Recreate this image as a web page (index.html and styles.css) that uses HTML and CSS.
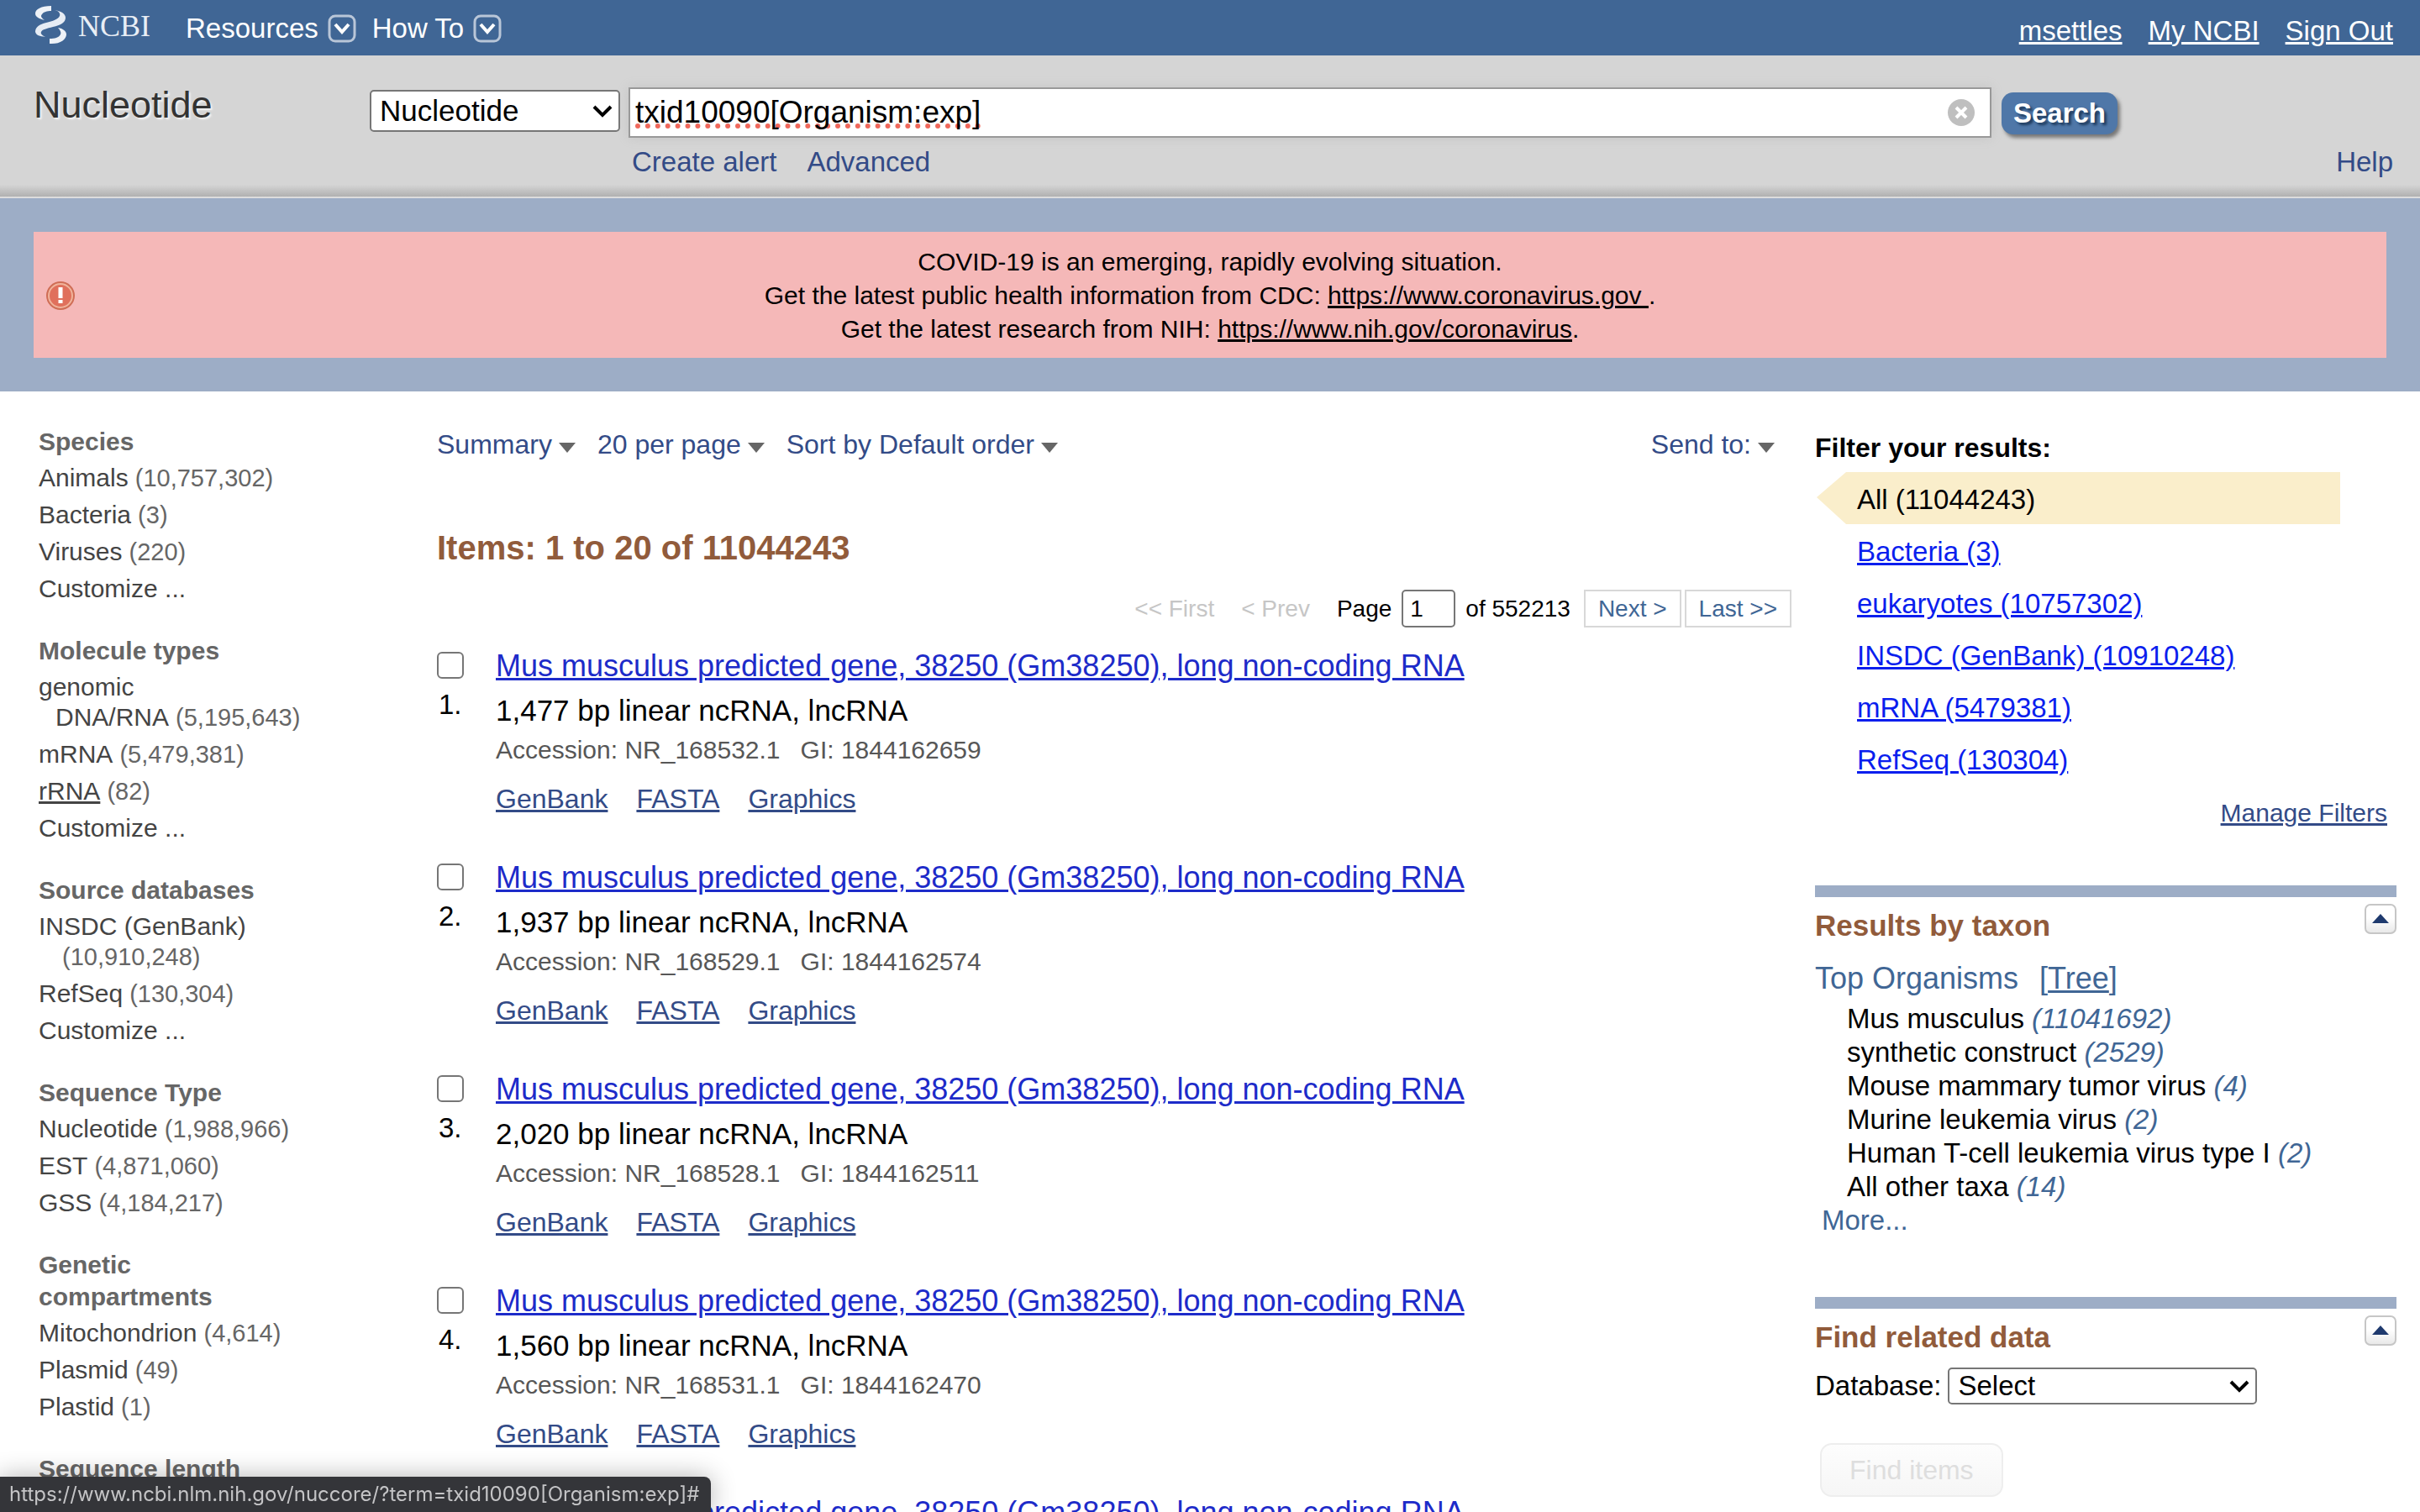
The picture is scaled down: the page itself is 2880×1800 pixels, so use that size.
FILE: index.html
```html
<!DOCTYPE html>
<html lang="en">
<head>
<meta charset="utf-8">
<title>txid10090[Organism:exp] - Nucleotide - NCBI</title>
<link rel="stylesheet" href="styles.css">
</head>
<body>
<svg class="symbols" aria-hidden="true">
  <symbol id="boxed-arrow" viewBox="0 0 34 34">
    <rect x="2" y="2" width="30" height="30" rx="7" fill="none" stroke="#b9c6d8" stroke-width="3"/>
    <path d="M9 12l8 9 8-9" fill="none" stroke="#fff" stroke-width="4"/>
  </symbol>
  <symbol id="caret" viewBox="0 0 20 12"><path d="M0 0h20L10 12z" fill="#666"/></symbol>
  <symbol id="chevron" viewBox="0 0 24 16"><path d="M2 3l10 10L22 3" fill="none" stroke="#000" stroke-width="4"/></symbol>
</svg>

<nav class="topbar">
  <a class="logo" href="#">
    <svg width="40" height="48" viewBox="0 0 40 48" aria-hidden="true">
      <path d="M20 0C8 0 1 4 1 9c0 4 4 6 11 8-4-3-5-5-3-7 2-3 6-4 11-4z" fill="#eef2f7"/>
      <path d="M24 5c5 1 7 4 6 7-2 4-8 6-16 8C6 22 1 25 1 31c1 4 5 5 12 6-4-2-6-4-5-6 1-3 7-4 14-6 9-2 15-5 15-11C37 9 31 6 24 5z" fill="#e6ecf4"/>
      <path d="M28 26c3 3 4 6 3 8-2 4-7 5-13 5v6c12 1 20-5 20-11 0-4-4-7-10-8z" fill="#eef2f7"/>
    </svg>
    <span>NCBI</span>
  </a>
  <button class="menu" type="button">Resources <svg width="34" height="34"><use href="#boxed-arrow"/></svg></button>
  <button class="menu" type="button">How To <svg width="34" height="34"><use href="#boxed-arrow"/></svg></button>
  <div class="account">
    <a href="#">msettles</a>
    <a href="#">My NCBI</a>
    <a href="#">Sign Out</a>
  </div>
</nav>

<header class="searchbar">
  <h1>Nucleotide</h1>
  <form class="search">
    <span class="select search-db">
      <select aria-label="Database to search"><option>Nucleotide</option></select>
      <svg width="24" height="16" aria-hidden="true"><use href="#chevron"/></svg>
    </span>
    <span class="term">
      <input type="text" aria-label="Search term" value="txid10090[Organism:exp]" spellcheck="false">
      <button class="clear" type="button" aria-label="Clear">
        <svg width="34" height="34" viewBox="0 0 34 34"><circle cx="17" cy="17" r="16" fill="#bfbfbf"/><path d="M11 11l12 12M23 11L11 23" stroke="#fff" stroke-width="4"/></svg>
      </button>
    </span>
    <button class="go" type="submit">Search</button>
  </form>
  <div class="search-links">
    <a href="#">Create alert</a>
    <a href="#">Advanced</a>
    <a class="help" href="#">Help</a>
  </div>
</header>

<section class="notice">
  <div class="notice-box">
    <svg width="36" height="36" viewBox="0 0 36 36" aria-hidden="true">
      <circle cx="18" cy="18" r="17" fill="#cf6d55"/>
      <circle cx="18" cy="18" r="14" fill="#e0705c" stroke="#f0b49c" stroke-width="2"/>
      <path d="M18 8v13M18 23v4" stroke="#fff" stroke-width="5"/>
    </svg>
    <p>COVID-19 is an emerging, rapidly evolving situation.<br>
    Get the latest public health information from CDC: <a href="#">https://www.coronavirus.gov&nbsp;</a>.<br>
    Get the latest research from NIH: <a href="#">https://www.nih.gov/coronavirus</a>.</p>
  </div>
</section>

<div class="page">
  <aside class="facets">
    <section>
      <h2>Species</h2>
      <ul>
        <li><a href="#">Animals</a> (10,757,302)</li>
        <li><a href="#">Bacteria</a> (3)</li>
        <li><a href="#">Viruses</a> (220)</li>
        <li><a href="#">Customize ...</a></li>
      </ul>
    </section>
    <section>
      <h2>Molecule types</h2>
      <ul>
        <li><a href="#">genomic<br>DNA/RNA</a> (5,195,643)</li>
        <li><a href="#">mRNA</a> (5,479,381)</li>
        <li><a class="hovered" href="#">rRNA</a> (82)</li>
        <li><a href="#">Customize ...</a></li>
      </ul>
    </section>
    <section>
      <h2>Source databases</h2>
      <ul>
        <li><a href="#">INSDC (GenBank)</a><br>&nbsp;(10,910,248)</li>
        <li><a href="#">RefSeq</a> (130,304)</li>
        <li><a href="#">Customize ...</a></li>
      </ul>
    </section>
    <section>
      <h2>Sequence Type</h2>
      <ul>
        <li><a href="#">Nucleotide</a> (1,988,966)</li>
        <li><a href="#">EST</a> (4,871,060)</li>
        <li><a href="#">GSS</a> (4,184,217)</li>
      </ul>
    </section>
    <section>
      <h2>Genetic<br>compartments</h2>
      <ul>
        <li><a href="#">Mitochondrion</a> (4,614)</li>
        <li><a href="#">Plasmid</a> (49)</li>
        <li><a href="#">Plastid</a> (1)</li>
      </ul>
    </section>
    <section>
      <h2>Sequence length</h2>
    </section>
  </aside>

  <main class="results">
    <div class="display-bar">
      <a href="#">Summary<svg width="20" height="12"><use href="#caret"/></svg></a>
      <a href="#">20 per page<svg width="20" height="12"><use href="#caret"/></svg></a>
      <a href="#">Sort by Default order<svg width="20" height="12"><use href="#caret"/></svg></a>
      <a class="send" href="#">Send to:<svg width="20" height="12"><use href="#caret"/></svg></a>
    </div>
    <h2>Items: 1 to 20 of 11044243</h2>
    <div class="pager">
      <span class="off">&lt;&lt; First</span>
      <span class="off">&lt; Prev</span>
      <label for="pageno">Page</label>
      <input id="pageno" type="text" value="1">
      <span class="total">of 552213</span>
      <a href="#">Next &gt;</a>
      <a href="#">Last &gt;&gt;</a>
    </div>

    <article class="hit">
      <div class="mark"><input type="checkbox" id="hit1"><label for="hit1">1.</label></div>
      <div>
        <h3><a href="#">Mus musculus predicted gene, 38250 (Gm38250), long non-coding RNA</a></h3>
        <p class="desc">1,477 bp linear ncRNA, lncRNA</p>
        <p class="ids"><span>Accession: NR_168532.1</span><span>GI: 1844162659</span></p>
        <p class="links"><a href="#">GenBank</a><a href="#">FASTA</a><a href="#">Graphics</a></p>
      </div>
    </article>
    <article class="hit">
      <div class="mark"><input type="checkbox" id="hit2"><label for="hit2">2.</label></div>
      <div>
        <h3><a href="#">Mus musculus predicted gene, 38250 (Gm38250), long non-coding RNA</a></h3>
        <p class="desc">1,937 bp linear ncRNA, lncRNA</p>
        <p class="ids"><span>Accession: NR_168529.1</span><span>GI: 1844162574</span></p>
        <p class="links"><a href="#">GenBank</a><a href="#">FASTA</a><a href="#">Graphics</a></p>
      </div>
    </article>
    <article class="hit">
      <div class="mark"><input type="checkbox" id="hit3"><label for="hit3">3.</label></div>
      <div>
        <h3><a href="#">Mus musculus predicted gene, 38250 (Gm38250), long non-coding RNA</a></h3>
        <p class="desc">2,020 bp linear ncRNA, lncRNA</p>
        <p class="ids"><span>Accession: NR_168528.1</span><span>GI: 1844162511</span></p>
        <p class="links"><a href="#">GenBank</a><a href="#">FASTA</a><a href="#">Graphics</a></p>
      </div>
    </article>
    <article class="hit">
      <div class="mark"><input type="checkbox" id="hit4"><label for="hit4">4.</label></div>
      <div>
        <h3><a href="#">Mus musculus predicted gene, 38250 (Gm38250), long non-coding RNA</a></h3>
        <p class="desc">1,560 bp linear ncRNA, lncRNA</p>
        <p class="ids"><span>Accession: NR_168531.1</span><span>GI: 1844162470</span></p>
        <p class="links"><a href="#">GenBank</a><a href="#">FASTA</a><a href="#">Graphics</a></p>
      </div>
    </article>
    <article class="hit">
      <div class="mark"><input type="checkbox" aria-label="5"></div>
      <div>
        <h3><a href="#">Mus musculus predicted gene, 38250 (Gm38250), long non-coding RNA</a></h3>
      </div>
    </article>
  </main>

  <aside class="side">
    <section class="filters">
      <h2>Filter your results:</h2>
      <ul>
        <li class="current">All (11044243)</li>
        <li><a href="#">Bacteria (3)</a></li>
        <li><a href="#">eukaryotes (10757302)</a></li>
        <li><a href="#">INSDC (GenBank) (10910248)</a></li>
        <li><a href="#">mRNA (5479381)</a></li>
        <li><a href="#">RefSeq (130304)</a></li>
      </ul>
      <a class="manage" href="#">Manage Filters</a>
    </section>

    <section class="portlet">
      <div class="portlet-head">
        <h2>Results by taxon</h2>
        <button type="button" aria-label="Collapse"><svg width="20" height="11" viewBox="0 0 20 11"><path d="M10 0l10 11H0z" fill="#1f3a6e"/></svg></button>
      </div>
      <h3>Top Organisms <span>[<a href="#">Tree</a>]</span></h3>
      <ul class="taxa">
        <li>Mus musculus <a href="#">(11041692)</a></li>
        <li>synthetic construct <a href="#">(2529)</a></li>
        <li>Mouse mammary tumor virus <a href="#">(4)</a></li>
        <li>Murine leukemia virus <a href="#">(2)</a></li>
        <li>Human T-cell leukemia virus type I <a href="#">(2)</a></li>
        <li>All other taxa <a href="#">(14)</a></li>
      </ul>
      <a class="more" href="#">More...</a>
    </section>

    <section class="portlet">
      <div class="portlet-head">
        <h2>Find related data</h2>
        <button type="button" aria-label="Collapse"><svg width="20" height="11" viewBox="0 0 20 11"><path d="M10 0l10 11H0z" fill="#1f3a6e"/></svg></button>
      </div>
      <div class="related">
        <label for="related-db">Database:</label>
        <span class="select related-db">
          <select id="related-db"><option>Select</option></select>
          <svg width="24" height="16" aria-hidden="true"><use href="#chevron"/></svg>
        </span>
      </div>
      <button class="find" type="button" disabled>Find items</button>
    </section>
  </aside>
</div>

<div class="status">https://www.ncbi.nlm.nih.gov/nuccore/?term=txid10090[Organism:exp]#</div>
</body>
</html>
```

FILE: styles.css
```css
* { box-sizing: border-box; }

body {
  margin: 0;
  height: 100vh;
  overflow: hidden;
  background: #fff;
  color: #000;
  font: 33px/40px "Liberation Sans", Arial, sans-serif;
}

h1, h2, h3, p, ul { margin: 0; padding: 0; }
ul { list-style: none; }
a { color: #334b87; }
button, input, select { font: inherit; color: inherit; margin: 0; }
svg { flex: none; }
.symbols { display: none; }

/* top bar */
.topbar {
  display: flex;
  align-items: center;
  height: 66px;
  padding: 0 32px 0 41px;
  background: #406695;
  color: #fff;
}
.logo {
  display: flex;
  align-items: center;
  gap: 12px;
  height: 62px;
  margin: 0 42px 4px 0;
  color: #e9eef5;
  font: 36px/48px "Liberation Serif", "Times New Roman", serif;
  text-decoration: none;
}
.menu {
  display: flex;
  align-items: center;
  gap: 11px;
  margin-right: 19px;
  padding: 2px 0 0;
  border: 0;
  background: none;
}
.account { display: flex; gap: 31px; margin: 7px 0 0 auto; }
.account a { color: #fff; }

/* search header */
.searchbar {
  display: grid;
  grid-template-columns: 400px 1fr;
  align-content: start;
  align-items: start;
  height: 170px;
  padding: 38px 32px 0 40px;
  border-bottom: 2px solid #dcdcdc;
  background: linear-gradient(#d5d5d5 calc(100% - 14px), #b0b0b0);
}
.searchbar h1 {
  color: #333;
  font-size: 45px;
  font-weight: 400;
  line-height: 42px;
  text-shadow: 2px 2px 2px #f4f4f4;
}
.search { display: flex; align-items: center; height: 60px; margin-right: 328px; }
.select { display: grid; align-items: center; }
.select > * { grid-area: 1 / 1; }
.select svg { justify-self: end; margin-right: 9px; pointer-events: none; }
.select select {
  width: 100%;
  height: 100%;
  padding: 0 0 0 10px;
  border: 2px solid #767676;
  border-radius: 5px;
  background: #fff;
  appearance: none;
}
.search-db { width: 298px; height: 50px; margin: 0 10px 5px 0; font-size: 35px; }
.term {
  display: flex;
  flex: 1;
  align-items: center;
  height: 60px;
  padding: 0 17px 0 6px;
  border: 2px solid #999;
  background: #fff;
  box-shadow: 0 0 12px #c4c4c4;
}
.term input {
  flex: 1;
  height: 56px;
  padding: 0;
  border: 0;
  outline: 0;
  background: none;
  font-size: 37px;
  text-decoration: underline dotted #f0695c 6px;
  text-underline-offset: 1px;
  text-decoration-skip-ink: none;
}
.clear { display: flex; padding: 0; border: 0; background: none; }
.go {
  height: 50px;
  margin: 2px 0 0 12px;
  padding: 0 14px;
  border: 0;
  border-radius: 14px;
  background: #4f77a8;
  box-shadow: 3px 4px 4px #777;
  color: #fff;
  font-weight: 700;
  text-shadow: 3px 3px 3px #1e3a5c;
}
.search-links { grid-column: 2; display: flex; gap: 36px; padding: 9px 0 0 312px; }
.search-links a { text-decoration: none; }
.search-links .help { margin-left: auto; }

/* notice */
.notice { padding: 40px; background: #9dadc6; }
.notice-box {
  display: flex;
  align-items: center;
  padding: 16px 50px 14px 14px;
  background: #f5b8b8;
}
.notice-box p { flex: 1; font-size: 30px; text-align: center; }
.notice-box a { color: inherit; }

/* three columns */
.page {
  display: grid;
  grid-template-columns: 446px 1fr 692px;
  column-gap: 28px;
  padding: 0 28px 0 46px;
}

.facets { padding-top: 41px; color: #666; }
.facets section { margin-bottom: 37px; }
.facets h2 { font-size: 30px; line-height: 38px; }
.facets li {
  margin-top: 8px;
  padding-left: 20px;
  font-size: 29px;
  line-height: 36px;
  text-indent: -20px;
}
.facets li:first-child { margin-top: 6px; }
.facets a { color: #444; font-size: 30px; text-decoration: none; }
.facets .hovered { text-decoration: underline; }

/* results */
.results { padding-top: 43px; }
.display-bar { display: flex; gap: 26px; padding-right: 20px; font-size: 32px; }
.display-bar a { display: flex; align-items: center; gap: 8px; text-decoration: none; }
.display-bar svg { margin-top: 7px; }
.display-bar .send { margin-left: auto; }
.results > h2 { margin-top: 80px; color: #915b3b; font-size: 40px; line-height: 46px; }
.pager {
  display: flex;
  justify-content: flex-end;
  align-items: center;
  height: 45px;
  margin: 27px 0 23px;
  font-size: 28px;
}
.pager .off { margin-right: 32px; color: #c6c6c6; }
.pager label { margin-right: 12px; }
.pager input {
  width: 64px;
  height: 45px;
  padding: 0 8px;
  border: 2px solid #767676;
  border-radius: 5px;
}
.pager .total { margin: 0 12px; }
.pager a {
  margin-left: 4px;
  padding: 0 15px;
  border: 2px solid #d8d8d8;
  color: #406695;
  line-height: 41px;
  text-decoration: none;
}

.hit { display: grid; grid-template-columns: 70px 1fr; margin-bottom: 51px; }
.mark { display: flex; flex-direction: column; gap: 13px; padding-top: 6px; }
.mark input {
  width: 32px;
  height: 32px;
  border: 2px solid #767676;
  border-radius: 6px;
  background: #fff;
  appearance: none;
}
.mark label { padding-left: 2px; line-height: 36px; }
.hit h3 { padding-top: 2px; font-size: 36px; font-weight: 400; line-height: 42px; }
.hit h3 a { color: #1d2bc9; }
.desc { margin-top: 12px; font-size: 35px; }
.ids { display: flex; gap: 24px; margin-top: 9px; color: #575757; font-size: 30px; line-height: 36px; }
.links { display: flex; gap: 34px; margin-top: 20px; font-size: 32px; }

/* right column */
.side { padding-top: 47px; }
.filters h2 { margin-bottom: 9px; }
.filters h2, .find { font-size: 32px; }
.filters li { margin-right: 67px; padding: 4px 0 0 50px; line-height: 58px; }
.filters li a { color: #0a1eee; }
.filters .current {
  background: #faeecb;
  clip-path: polygon(2px 30px, 37px 0, 100% 0, 100% 100%, 37px 100%);
}
.manage {
  display: block;
  margin: 16px 11px 68px 0;
  font-size: 30px;
  line-height: 36px;
  text-align: right;
}
.portlet { margin-bottom: 71px; border-top: 14px solid #9dadc6; }
.portlet-head { display: flex; justify-content: space-between; padding-top: 8px; }
.portlet-head h2 { padding-top: 5px; color: #915b3b; font-size: 35px; line-height: 42px; }
.portlet-head button {
  display: flex;
  align-items: center;
  justify-content: center;
  width: 38px;
  height: 36px;
  padding: 0 0 2px;
  border: 2px solid #c6c6c6;
  border-radius: 7px;
  background: linear-gradient(#fff 45%, #e9e9e9);
}
.portlet h3 { margin: 21px 0 7px; color: #406695; font-size: 36px; font-weight: 400; line-height: 42px; }
.portlet h3 span { margin-left: 15px; }
.portlet h3 a { color: inherit; }
.taxa { padding-left: 38px; }
.taxa a { color: #406695; font-style: italic; text-decoration: none; }
.more { display: block; padding-left: 8px; color: #406695; text-decoration: none; }
.related { display: flex; align-items: center; gap: 8px; margin: 15px 0 46px; }
.related-db { width: 368px; height: 44px; }
.find {
  height: 64px;
  margin-left: 6px;
  padding: 0 33px;
  border: 2px solid #eee;
  border-radius: 14px;
  background: linear-gradient(#fdfdfd, #f6f6f6);
  color: #dedede;
}

/* link address shown over the page's bottom edge */
.status {
  position: fixed;
  left: 0;
  bottom: 0;
  padding: 0 14px 0 11px;
  border-radius: 0 8px 0 0;
  background: #343539;
  box-shadow: 0 0 30px rgba(0, 0, 0, 0.3);
  color: #c4c4c6;
  font: 24px/42px Inter, sans-serif;
}
```
